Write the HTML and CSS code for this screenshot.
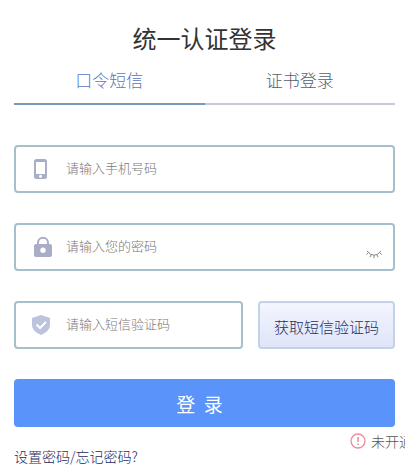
FILE: index.html
```html
<!DOCTYPE html>
<html lang="zh-CN">
<head>
    <meta charset="UTF-8">
    <meta name="viewport" content="width=device-width, initial-scale=1.0">
    <title>统一认证登录</title>
    <link rel="stylesheet" href="styles.css">
</head>
<body>
    <main class="login-panel">
        <h1 class="login-title">统一认证登录</h1>

        <div class="tabs" role="tablist">
            <button type="button" class="tab active" role="tab" aria-selected="true">口令短信</button>
            <button type="button" class="tab" role="tab" aria-selected="false">证书登录</button>
        </div>

        <form class="login-form">
            <div class="field">
                <label class="field-icon" for="phone" aria-label="手机号码">
                    <svg width="20" height="22" viewBox="0 0 20 22">
                        <path fill="#a9adc5" fill-rule="evenodd" d="M4.500 1h8a2.500 2.500 0 0 1 2.500 2.500v15a2.500 2.500 0 0 1-2.500 2.500h-8A2.500 2.500 0 0 1 2 18.500v-15A2.500 2.500 0 0 1 4.500 1zM4 4v12h9V4zM8.500 16.800a1.500 1.500 0 1 0 0 3a1.500 1.500 0 1 0 0-3z"/>
                    </svg>
                </label>
                <input type="tel" id="phone" placeholder="请输入手机号码">
            </div>

            <div class="field">
                <label class="field-icon" for="password" aria-label="密码">
                    <svg width="20" height="22" viewBox="0 0 20 22">
                        <path fill="none" stroke="#a9adc5" stroke-width="2" d="M6 9V6.500a5 4.800 0 0 1 10 0V9"/>
                        <path fill="#a9adc5" fill-rule="evenodd" d="M4 8h14a2 2 0 0 1 2 2v9a2 2 0 0 1-2 2H4a2 2 0 0 1-2-2v-9a2 2 0 0 1 2-2zM11 11.500a2.700 2.700 0 1 0 0 5.400a2.700 2.700 0 1 0 0-5.400z"/>
                    </svg>
                </label>
                <input type="password" id="password" placeholder="请输入您的密码">
                <button type="button" class="eye-btn" aria-label="显示密码">
                    <svg width="18" height="10" viewBox="0 0 18 10" fill="none" stroke="#85858a">
                        <path d="M2 1q7 8.500 14 0M3.200 3L1.300 4.500M6 5L5 7.200M9 5.500v2.500M12 5l1 2.200M14.800 3l1.900 1.500"/>
                    </svg>
                </button>
            </div>

            <div class="code-row">
                <div class="field">
                    <label class="field-icon" for="code" aria-label="短信验证码">
                        <svg width="20" height="22" viewBox="0 0 20 22">
                            <path fill="#bcc3dc" d="M9 1l9 3v7q0 6-9 10q-9-4-9-10V4z"/>
                            <path fill="none" stroke="#fff" stroke-width="2" d="M4.500 10.500l3.500 3.500l6-6"/>
                        </svg>
                    </label>
                    <input type="text" id="code" placeholder="请输入短信验证码">
                </div>
                <button type="button" class="code-btn">获取短信验证码</button>
            </div>

            <button type="submit" class="login-btn">登&nbsp;&nbsp;录</button>
        </form>

        <div class="login-footer">
            <a href="#" class="forgot-link">设置密码/忘记密码?</a>
            <div class="notice">
                <svg class="notice-icon" width="16" height="16" viewBox="0 0 16 16" fill="none" stroke="#ee8c98">
                    <circle cx="8" cy="8" r="7" stroke-width="1.300"/>
                    <path stroke-width="1.500" d="M8 4v5M8 10.500v1.500"/>
                </svg>
                <span>未开通</span>
            </div>
        </div>
    </main>
</body>
</html>
```
FILE: styles.css
```css
* {
    margin: 0;
    padding: 0;
    box-sizing: border-box;
}

body {
    font-family: 'Noto Sans CJK SC', sans-serif;
    font-weight: 300;
    background: #fff;
    color: #333;
}

button,
input {
    font-family: inherit;
    font-weight: inherit;
}

button {
    cursor: pointer;
}

.login-panel {
    margin-right: 12px;
    padding: 20px 10px 6px 14px;
    overflow: hidden;
}

.login-title {
    font-size: 24px;
    font-weight: 400;
    line-height: 36px;
    text-align: center;
}

.tabs {
    display: flex;
    margin-bottom: 40px;
}

.tab {
    flex: 1;
    height: 49px;
    padding-bottom: 1px;
    border: none;
    border-bottom: 2px solid #c6cad8;
    background: none;
    font-size: 17px;
    color: #566070;
}

.tab.active {
    border-bottom-color: #7698b9;
    color: #5876c4;
}

.login-form {
    display: flex;
    flex-direction: column;
    gap: 30px;
}

.field {
    display: flex;
    align-items: center;
    flex: 1;
    min-width: 0;
    height: 48px;
    padding: 0 10px 0 16px;
    border: 2px solid #a6bfcc;
    border-radius: 4px;
}

.field-icon {
    display: flex;
    width: 34px;
}

.field input {
    flex: 1;
    min-width: 0;
    height: 44px;
    padding-bottom: 4px;
    border: none;
    outline: none;
    background: none;
    font-size: 13px;
    color: #333;
}

.field input::placeholder {
    color: #777;
}

.login-form > .field {
    flex: none;
}

.eye-btn {
    display: flex;
    margin-top: 16px;
    border: none;
    background: none;
}

.code-row {
    display: flex;
    gap: 15px;
}

.code-btn {
    width: 137px;
    height: 48px;
    padding-top: 2px;
    border: 2px solid #c3d2e8;
    border-radius: 4px;
    background: linear-gradient(#f3f5fe, #dfe5f8);
    font-size: 15px;
    color: #1f2e68;
}

.login-btn {
    height: 48px;
    padding-right: 10px;
    border: none;
    border-radius: 4px;
    background: #5a93f9;
    font-size: 19px;
    font-weight: 400;
    color: #fff;
}

.login-footer {
    display: flex;
    align-items: flex-start;
    justify-content: space-between;
    margin-right: -10px;
    padding-top: 4px;
    font-size: 14px;
    line-height: 20px;
}

.forgot-link {
    padding-top: 15px;
    color: #1a2a62;
    text-decoration: none;
}

.notice {
    display: flex;
    align-items: center;
    gap: 5px;
    width: 55px;
    overflow: hidden;
    white-space: nowrap;
    color: #555;
}

.notice-icon {
    flex: none;
}
```
